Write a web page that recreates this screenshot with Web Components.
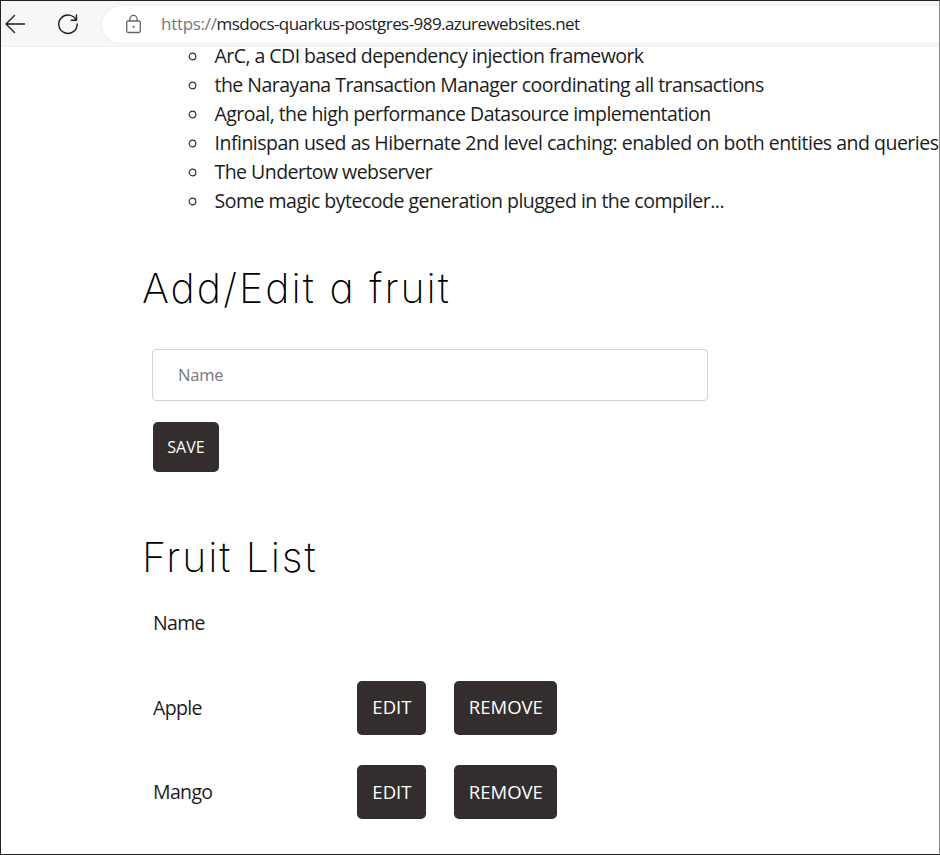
<!DOCTYPE html>
<html lang="en">
<head>
<meta charset="utf-8">
<title>Fruit List</title>
<style>
html,body{margin:0;height:100%;overflow:hidden;background:#fff}
body{font-family:"Open Sans","Noto Sans",sans-serif;color:#1c1c1c}
</style>
</head>
<body>
<fruit-window></fruit-window>
<script>
const define = (name, html) => {
  const t = document.createElement('template');
  t.innerHTML = html;
  customElements.define(name, class extends HTMLElement {
    constructor() {
      super();
      this.attachShadow({mode: 'open'}).append(t.content.cloneNode(true));
    }
  });
};

define('browser-bar', `<style>
:host{display:flex;align-items:center;box-sizing:border-box;height:46px;background:#f7f7f7;border-bottom:1px solid #f1f1f1;flex:none}
.nav{flex:none;display:block}
.address{flex:1;display:flex;align-items:center;height:37px;margin:2px 0 0 10px;border-radius:19px 0 0 19px;background:#fff;box-shadow:0 0 2px #ddd;padding-left:22px;font:17px "Open Sans",sans-serif;white-space:nowrap}
.lock{flex:none;margin:0 18px 0 0}
.url{letter-spacing:-.56px;color:#222;margin-top:-2px}
.scheme{color:#767676;letter-spacing:-.3px}
</style>
<svg class="nav" width="91" height="45" fill="none" stroke="#1d1d1d" stroke-width="1.4" stroke-linecap="round" stroke-linejoin="round"><path d="M23.500 23H5M13.500 14.500L5 23l8.500 8.500"/><path d="M75.300 19.200A9.200 9.200 0 1 0 76.200 23M75.500 14v5.300h-5.300"/></svg>
<div class="address"><svg class="lock" width="19" height="22" fill="none" stroke="#666" stroke-width="1.3"><rect x="2.700" y="7" width="13.600" height="11.500" rx="1.500"/><path d="M5.900 7V5a3.600 3.600 0 0 1 7.200 0v2"/><circle cx="9.500" cy="12.700" r="1" fill="#555" stroke="none"/></svg><span class="url"><span class="scheme">https://</span>msdocs-quarkus-postgres-989.azurewebsites.net</span></div>`);

define('feature-list', `<style>
:host{display:block}
</style><slot></slot>`);

define('feature-item', `<style>
:host{display:flex;align-items:center;white-space:nowrap;font-size:19.5px;line-height:29px;letter-spacing:var(--track,-.54px)}
svg{flex:none;margin:1px 17.5px 0 0}
</style><svg width="9" height="9" fill="none" stroke="#333" stroke-width="1.200"><circle cx="4.500" cy="4.500" r="3.300"/></svg><slot></slot>`);

define('section-title', `<style>
:host{display:block;font:200 41px/50px Inter,Lato,sans-serif;font-feature-settings:"cv11" 1;letter-spacing:var(--track,2.05px);white-space:nowrap;color:#000}
</style><slot></slot>`);

define('name-field', `<style>
:host{display:flex;align-items:center;box-sizing:border-box;width:556px;height:52px;border:1px solid #d2d2d2;border-radius:4px;padding:0 0 1px 25px;font-size:16.500px;letter-spacing:-.2px;color:#777}
</style><slot></slot>`);

define('dark-button', `<style>
:host{display:flex;align-items:center;justify-content:center;box-sizing:border-box;width:var(--w);height:54px;border-radius:5px;background:#332e2d;color:#fff;font-size:18.500px;padding-bottom:2px;letter-spacing:0;flex:none}
</style><slot></slot>`);

define('fruit-row', `<style>
:host{display:flex;align-items:center;height:54px;font-size:19.5px;letter-spacing:-.65px}
.name{width:204.4px;flex:none;margin-top:-1px}
.edit{--w:69px;margin-right:28px}
.remove{--w:103px}
</style><span class="name"><slot></slot></span><dark-button class="edit">EDIT</dark-button><dark-button class="remove">REMOVE</dark-button>`);

define('fruit-window', `<style>
:host{display:flex;flex-direction:column;box-sizing:border-box;width:940px;height:855px;border:1px solid #242124;border-right-color:#8a8a8a;overflow:hidden;background:#fff}
main{padding-left:142px}
feature-list{padding-left:45px;margin-top:-6px}
.wide{--track:-.495px}
.add{margin-top:48px;margin-left:-1px}
name-field{margin:36px 0 0 9px}
.save{--w:66px;height:50px;font-size:16px;margin:21px 0 0 10px;padding-bottom:0}
.list{margin-top:60px;margin-left:-1px;--track:1.9px}
.head{margin:28px 0 0 10px;font-size:19.5px;letter-spacing:-.65px;line-height:26px}
fruit-row{margin:30.5px 0 0 10px}
.first{margin-top:44.5px}
</style>
<browser-bar></browser-bar>
<main>
<feature-list>
<feature-item>ArC, a CDI based dependency injection framework</feature-item>
<feature-item>the Narayana Transaction Manager coordinating all transactions</feature-item>
<feature-item>Agroal, the high performance Datasource implementation</feature-item>
<feature-item class="wide">Infinispan used as Hibernate 2nd level caching: enabled on both entities and queries</feature-item>
<feature-item>The Undertow webserver</feature-item>
<feature-item class="wide">Some magic bytecode generation plugged in the compiler...</feature-item>
</feature-list>
<section-title class="add">Add/Edit a fruit</section-title>
<name-field>Name</name-field>
<dark-button class="save">SAVE</dark-button>
<section-title class="list">Fruit List</section-title>
<div class="head">Name</div>
<fruit-row class="first">Apple</fruit-row>
<fruit-row>Mango</fruit-row>
</main>`);
</script>
</body>
</html>
